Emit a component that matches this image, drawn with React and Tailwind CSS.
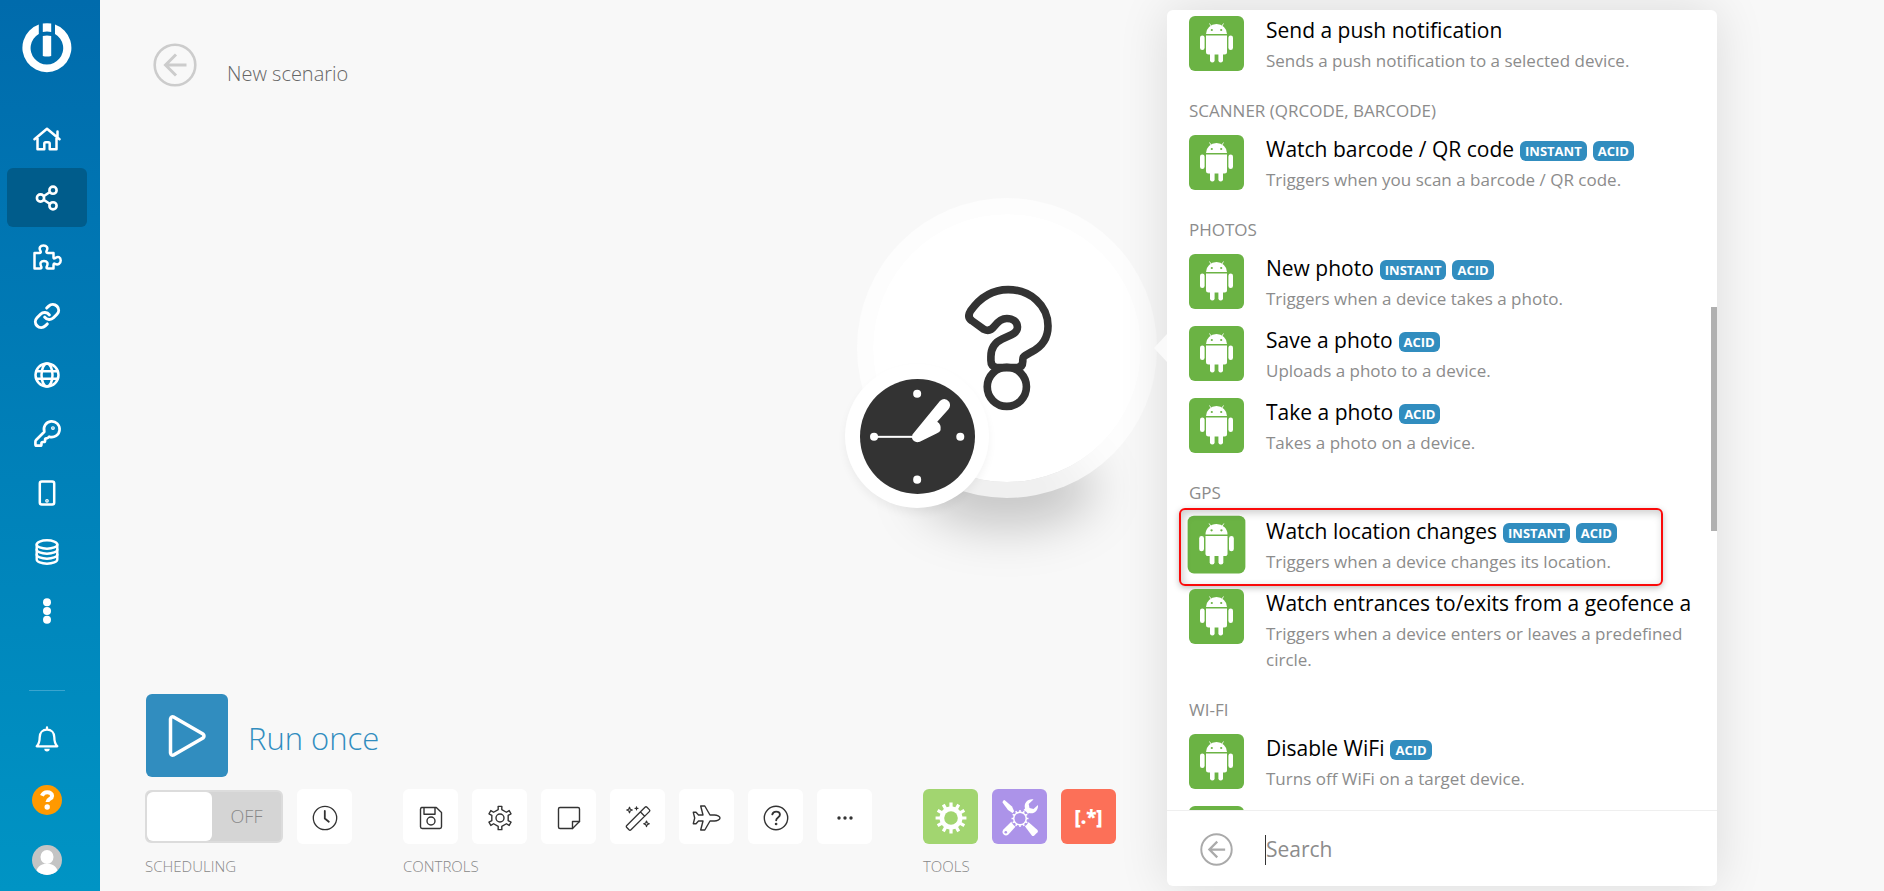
import React from "react";
import { KeyRound, Link } from "lucide-react";

const gearPath = (teeth, outer, inner, top, base) => {
  const step = (Math.PI * 2) / teeth;
  const point = (r, a) =>
    `${(r * Math.sin(a)).toFixed(2)} ${(-r * Math.cos(a)).toFixed(2)}`;
  const points = [];
  for (let i = 0; i < teeth; i++) {
    const a = i * step;
    points.push(point(inner, a - step * base));
    points.push(point(outer, a - step * top));
    points.push(point(outer, a + step * top));
    points.push(point(inner, a + step * base));
  }
  return `M${points.join("L")}Z`;
};

const Icon = ({ w = 26, h = 26, stroke = 2.5, className = "", children }) => (
  <svg
    width={w}
    height={h}
    viewBox={`0 0 ${w} ${h}`}
    fill="none"
    stroke="currentColor"
    strokeWidth={stroke}
    strokeLinecap="round"
    strokeLinejoin="round"
    className={className}
    aria-hidden="true"
  >
    {children}
  </svg>
);

const Logo = () => (
  <svg width="50" height="50" viewBox="0 0 50 50" aria-hidden="true">
    <path
      d="M16.8 1.600A24.500 24.500 0 1 0 33 1.600V11A16.300 16.300 0 1 1 16.800 11Z"
      fill="#fff"
    />
    <path d="M20.800 .5Q25 0 29.200 .5V9Q25 8 20.800 9Z" fill="#fff" />
    <path d="M20.800 13Q25 12 29.200 13V33Q25 34 20.800 33Z" fill="#fff" />
  </svg>
);

const HomeIcon = () => (
  <Icon w={28} h={24}>
    <path d="M1.500 12.300L14 1.800l12.500 10.500M24.500 4.500v5.500M4.500 11v11.300h6.800v-5.500q0-1.500 1.500-1.500h2.400q1.500 0 1.500 1.500v5.500h6.800V11" />
  </Icon>
);

const ShareIcon = () => (
  <Icon w={24} h={26} stroke={2.6}>
    <circle cx="5.500" cy="13" r="3.600" />
    <circle cx="18" cy="5.200" r="3.600" />
    <circle cx="18" cy="20.800" r="3.600" />
    <path d="M9 11l6-4M9 15l6 4" />
  </Icon>
);

const PuzzleIcon = () => (
  <Icon w={29} h={26}>
    <path d="M1.500 9H6.500Q8.300 9 7.500 7C5.500 3.500 7.500 1.500 10.500 1.500C13.500 1.500 15.500 3.500 13.500 7Q13 9 15 9H20.500V13.500Q20.500 15 22 14.200C25 11.500 27.700 13.500 27.700 16.500C27.700 19.500 25 21.500 22 19.800Q20.500 19 20.500 21V24.500H15Q13 24.500 13.800 22.500C15.500 19 14 17 11 17C8 17 6.500 19 8.200 22.500Q9 24.500 7 24.500H1.500Z" />
  </Icon>
);

const GlobeIcon = () => (
  <Icon>
    <circle cx="13" cy="13" r="11.500" />
    <ellipse cx="13" cy="13" rx="5.500" ry="11.500" />
    <path d="M2.500 9.300h21M2.500 16.700h21" />
  </Icon>
);

const PhoneIcon = () => (
  <Icon w={18} h={26}>
    <rect x="1.800" y="1.500" width="14.400" height="23" rx="2" />
    <circle cx="9" cy="20.800" r=".6" />
  </Icon>
);

const DatabaseIcon = () => (
  <Icon w={24} h={26} stroke={2.4}>
    <ellipse cx="12" cy="5.500" rx="10.300" ry="4.200" />
    <path d="M1.700 5.500v15c0 2.300 4.600 4.200 10.300 4.200s10.300-1.900 10.300-4.200v-15" />
    <path d="M1.700 10.500c0 2.300 4.600 4.200 10.300 4.200s10.300-1.900 10.300-4.200M1.700 15.500c0 2.300 4.600 4.200 10.300 4.200s10.300-1.900 10.300-4.200" />
  </Icon>
);

const DotsIcon = () => (
  <Icon w={10} h={26} stroke={0}>
    <g fill="currentColor">
      <circle cx="5" cy="4.300" r="4" />
      <circle cx="5" cy="13" r="4" />
      <circle cx="5" cy="21.700" r="4" />
    </g>
  </Icon>
);

const BellIcon = () => (
  <Icon w={24} h={26} stroke={2.3}>
    <path d="M12 1.500v2M1.700 20.300h20.600c-2.300-2.300-3-4-3-9 0-4.500-3-7.600-7.300-7.600s-7.300 3.100-7.300 7.600c0 5-.7 6.700-3 9z" />
    <path d="M9.300 22.800h5.400a2.700 2.700 0 0 1-5.400 0z" fill="currentColor" stroke="none" />
  </Icon>
);

const HelpIcon = () => (
  <svg width="30" height="30" viewBox="0 0 30 30" aria-hidden="true">
    <circle cx="15" cy="15" r="15" fill="#f90" />
    <path
      d="M9.900 10.800C11 8.300 12.800 7.200 15.200 7.200c3 0 4.900 1.500 4.900 3.700 0 3.300-4.600 2.700-4.600 6"
      fill="none"
      stroke="#fff"
      strokeWidth="4"
    />
    <circle cx="15.200" cy="22" r="2.700" fill="#fff" />
  </svg>
);

const Avatar = () => (
  <svg width="30" height="30" viewBox="0 0 30 30" aria-hidden="true">
    <clipPath id="avatar">
      <circle cx="15" cy="15" r="15" />
    </clipPath>
    <g clipPath="url(#avatar)">
      <rect width="30" height="30" fill="#c4c4c4" />
      <ellipse cx="15" cy="12" rx="6.500" ry="7" fill="#fff" />
      <path d="M4 30c0-7 3-9.500 8-11h6c5 1.500 8 4 8 11z" fill="#fff" />
    </g>
  </svg>
);

const BackIcon = ({ size, className }) => (
  <svg
    width={size}
    height={size}
    viewBox="0 0 44 44"
    fill="none"
    stroke="currentColor"
    strokeWidth="2.600"
    className={className}
    aria-hidden="true"
  >
    <circle cx="22" cy="22" r="20.300" />
    <path d="M33.500 22H12.500M23 11.500L12.500 22 23 32.500" strokeWidth="3" />
  </svg>
);

const ClockIcon = () => (
  <Icon stroke={1.300}>
    <circle cx="13" cy="13" r="11.700" />
    <path d="M12.800 6v7.500l4 3.200" strokeWidth="1.800" />
  </Icon>
);

const SaveIcon = () => (
  <Icon stroke={1.400}>
    <path d="M3.500 2.500h14.800l5.200 5v14.300q0 1.700-1.700 1.700H4.200q-1.700 0-1.700-1.700V4.200q0-1.700 1.700-1.700" />
    <path d="M6 2.700v6.500h11V2.700" />
    <circle cx="13" cy="16" r="4" />
  </Icon>
);

const SettingsIcon = () => (
  <Icon stroke={1.400}>
    <g transform="translate(13 13)">
      <path d={gearPath(6, 11.800, 8.600, 0.15, 0.2)} />
      <circle r="4" />
    </g>
  </Icon>
);

const NoteIcon = () => (
  <Icon stroke={1.400}>
    <path d="M23.500 16.500v-12.500q0-1.500-1.500-1.500H4q-1.500 0-1.500 1.500v18q0 1.500 1.500 1.500h12.500z" />
    <path d="M16.500 23.500v-7h7" />
  </Icon>
);

const WandIcon = () => (
  <Icon stroke={1.300}>
    <path d="M1.800 20.500L20 2.300q1-1 2 0l2.300 2.300q1 1 0 2L6 24.800q-1 1-2 0L1.800 22.500q-1-1 0-2zM15.500 7l4.200 4.200" />
    <path
      d="M4.500 2.200l.8 2 2 .8-2 .8-.8 2-.8-2-2-.8 2-.8zM21.500 16l.8 2 2 .8-2 .8-.8 2-.8-2-2-.8 2-.8zM11.500 1.800v3M10 3.300h3"
      strokeWidth="1.200"
    />
  </Icon>
);

const PlaneIcon = () => (
  <Icon w={29} h={26} stroke={1.400}>
    <path d="M22.500 10H18L12.800 1H8.700l2.300 9H6.500L4 7.300H1.300L2.700 13l-1.400 5.700H4L6.500 16H11l-2.300 9h4.100L18 16h4.500c2.500 0 5.500-1.200 5.500-3s-3-3-5.500-3z" />
  </Icon>
);

const QuestionIcon = () => (
  <Icon stroke={1.400}>
    <circle cx="13" cy="13" r="11.700" />
    <path
      d="M9.300 9.300c.7-1.800 2-2.700 3.800-2.700 2.200 0 3.800 1.300 3.800 3.200 0 2.700-3.700 2.600-3.700 5.400"
      strokeWidth="1.900"
    />
    <circle cx="13.100" cy="19" r=".6" strokeWidth="1.500" />
  </Icon>
);

const MoreIcon = () => (
  <Icon stroke={0}>
    <g fill="currentColor">
      <circle cx="7" cy="13" r="1.700" />
      <circle cx="13" cy="13" r="1.700" />
      <circle cx="19" cy="13" r="1.700" />
    </g>
  </Icon>
);

const FlowControlIcon = () => (
  <svg width="32" height="32" viewBox="-16 -16 32 32" aria-hidden="true">
    <path d={gearPath(12, 15.500, 11.500, 0.2, 0.27)} fill="#fff" />
    <circle r="6.800" fill="#a2d570" />
  </svg>
);

const ToolsIcon = () => (
  <svg width="40" height="40" viewBox="0 0 40 40" aria-hidden="true">
    <path d="M4.500 2L12 8.500l2 4.500-1.800 1.800L8 12 2.500 4.500q0-2.500 2-2.500z" fill="#fff" />
    <path d="M11 12l5 5" stroke="#fff" strokeWidth="2" />
    <path
      d="M33.500 1.500C28 .5 23.500 5 25 10.500L21.500 14l4 4 3.500-3C34 16.500 38.500 12.500 38 7l-4.500 4-4-1-.8-4z"
      fill="#fff"
    />
    <path
      d="M15 21l-3 2-8.800 8.800q-1.700 2.700.5 4.700 2.300 2 4.700 0L17 27l1.500-3z"
      fill="#fff"
    />
    <circle cx="5.800" cy="34.200" r="1.300" fill="#ac93e9" />
    <path
      d="M22.500 25l3-3.500 12 10.500q1 1.200 0 2.300l-3.200 3.300q-1.300 1-2.500 0z"
      fill="#fff"
    />
    <circle cx="20" cy="20.500" r="9.300" fill="#ac93e9" />
    <g transform="translate(20 20.500)">
      <path d={gearPath(12, 8.500, 7, 0.16, 0.22)} fill="#fff" />
      <circle r="5.500" fill="#ac93e9" />
    </g>
  </svg>
);

const AndroidIcon = ({ className = "" }) => (
  <svg
    viewBox="0 0 55 55"
    className={`size-[55px] shrink-0 rounded-md bg-[#6bb344] ${className}`}
    aria-hidden="true"
  >
    <g fill="#fff">
      <path d="M17 18a10.500 10 0 0 1 21 0z" />
      <path d="M17 19.500h21V36a2.500 2.500 0 0 1-2.500 2.500h-16A2.500 2.500 0 0 1 17 36z" />
      <rect x="11" y="19.500" width="4.600" height="14.500" rx="2.300" />
      <rect x="39.400" y="19.500" width="4.600" height="14.500" rx="2.300" />
      <rect x="21" y="34" width="4.600" height="12.500" rx="2.200" />
      <rect x="29.400" y="34" width="4.600" height="12.500" rx="2.200" />
    </g>
    <path d="M20.500 7.500l2.500 4M34.500 7.500l-2.500 4" stroke="#fff" strokeWidth=".9" />
    <circle cx="22.800" cy="14" r="1.100" fill="#6bb344" />
    <circle cx="32.200" cy="14" r="1.100" fill="#6bb344" />
  </svg>
);

const NAV = [
  { name: "Home", icon: <HomeIcon /> },
  { name: "Scenarios", icon: <ShareIcon />, active: true },
  { name: "Templates", icon: <PuzzleIcon /> },
  { name: "Connections", icon: <Link size={28} strokeWidth={2.600} /> },
  { name: "Webhooks", icon: <GlobeIcon /> },
  { name: "Keys", icon: <KeyRound size={29} strokeWidth={2.200} /> },
  { name: "Devices", icon: <PhoneIcon /> },
  { name: "Data stores", icon: <DatabaseIcon /> },
  { name: "More", icon: <DotsIcon /> },
];

const CONTROLS = [
  { name: "Save", icon: <SaveIcon /> },
  { name: "Scenario settings", icon: <SettingsIcon /> },
  { name: "Notes", icon: <NoteIcon /> },
  { name: "Auto-align", icon: <WandIcon /> },
  { name: "Explain flow", icon: <PlaneIcon /> },
  { name: "Help", icon: <QuestionIcon /> },
  { name: "More controls", icon: <MoreIcon /> },
];

const GROUPS = [
  {
    items: [
      {
        title: "Send a push notification",
        description: "Sends a push notification to a selected device.",
      },
    ],
  },
  {
    name: "SCANNER (QRCODE, BARCODE)",
    items: [
      {
        title: "Watch barcode / QR code",
        description: "Triggers when you scan a barcode / QR code.",
        tags: ["INSTANT", "ACID"],
      },
    ],
  },
  {
    name: "PHOTOS",
    items: [
      {
        title: "New photo",
        description: "Triggers when a device takes a photo.",
        tags: ["INSTANT", "ACID"],
      },
      {
        title: "Save a photo",
        description: "Uploads a photo to a device.",
        tags: ["ACID"],
      },
      {
        title: "Take a photo",
        description: "Takes a photo on a device.",
        tags: ["ACID"],
      },
    ],
  },
  {
    name: "GPS",
    items: [
      {
        title: "Watch location changes",
        description: "Triggers when a device changes its location.",
        tags: ["INSTANT", "ACID"],
        marked: true,
      },
      {
        title: "Watch entrances to/exits from a geofence a",
        description: "Triggers when a device enters or leaves a predefined circle.",
      },
    ],
  },
  {
    name: "WI-FI",
    items: [
      {
        title: "Disable WiFi",
        description: "Turns off WiFi on a target device.",
        tags: ["ACID"],
      },
      { title: "", description: "" },
    ],
  },
];

const Sidebar = () => (
  <nav className="flex w-[100px] shrink-0 flex-col bg-linear-to-b from-[#006bac] to-[#0094c4] pr-[6px] text-white">
    <a href="#home" aria-label="Logo" className="flex justify-center pt-[23px] pb-9">
      <Logo />
    </a>
    {NAV.map(({ name, icon, active }) => (
      <a
        key={name}
        href="#nav"
        aria-label={name}
        className={`mx-[7px] flex h-[59px] shrink-0 items-center justify-center rounded-md ${
          active ? "bg-[#005c8b]" : ""
        }`}
      >
        {icon}
      </a>
    ))}
    <hr className="mx-auto mt-auto w-9 border-[#3aa5cf]" />
    <div className="flex flex-col items-center gap-[30px] pt-8 pb-4">
      <button type="button" aria-label="Notifications" className="flex h-8 items-center">
        <BellIcon />
      </button>
      <button type="button" aria-label="Help">
        <HelpIcon />
      </button>
      <button type="button" aria-label="Profile">
        <Avatar />
      </button>
    </div>
  </nav>
);

const SquareButton = ({ name, className = "bg-white", children }) => (
  <button
    type="button"
    aria-label={name}
    className={`flex size-[55px] items-center justify-center rounded-md pt-[2px] text-[#333] ${className}`}
  >
    {children}
  </button>
);

const ToolGroup = ({ label, children }) => (
  <div>
    <div className="flex h-[55px] items-center gap-[14px]">{children}</div>
    <div className="mt-3 text-[15px] leading-5 font-light text-[#888]">{label}</div>
  </div>
);

const Toolbar = () => (
  <div className="pb-[15px] pl-[45px]">
    <div className="mb-3 flex items-center gap-5 pl-px">
      <button
        type="button"
        aria-label="Run"
        className="flex h-[83px] w-[82px] items-center justify-center rounded-md bg-[#318dbf] text-white"
      >
        <Icon w={38} h={42} stroke={3.500}>
          <path d="M2.500 4v34q.5 3 3.500 1.800L35 23q2-2 0-4L6 2.200Q3 1 2.500 4z" />
        </Icon>
      </button>
      <span className="pt-1 text-[31px] leading-10 font-light text-[#318dbf]">Run once</span>
    </div>
    <div className="flex gap-[51px]">
      <ToolGroup label="SCHEDULING">
        <label className="flex h-[53px] w-[138px] cursor-pointer items-center rounded-md border-2 border-[#dcdcdc] bg-[#d5d5d5] text-[18px] font-light text-[#888]">
          <input type="checkbox" className="peer sr-only" />
          <span className="h-[49px] w-[65px] shrink-0 rounded-md bg-white" />
          <span className="flex-1 text-center">OFF</span>
        </label>
        <SquareButton name="Schedule settings">
          <ClockIcon />
        </SquareButton>
      </ToolGroup>
      <ToolGroup label="CONTROLS">
        {CONTROLS.map(({ name, icon }) => (
          <SquareButton key={name} name={name}>
            {icon}
          </SquareButton>
        ))}
      </ToolGroup>
      <ToolGroup label="TOOLS">
        <SquareButton name="Flow control" className="bg-[#a2d570]">
          <FlowControlIcon />
        </SquareButton>
        <SquareButton name="Tools" className="bg-[#ac93e9]">
          <ToolsIcon />
        </SquareButton>
        <SquareButton name="Text parser" className="bg-[#fc7058]">
          <span className="text-[19px] font-extrabold text-white">[.*]</span>
        </SquareButton>
      </ToolGroup>
    </div>
  </div>
);

const ModuleNode = () => (
  <div className="absolute top-[198px] left-[757px] size-[300px]">
    <div className="absolute bottom-[-30px] left-[62px] h-20 w-[176px] rounded-[50%] bg-black/20 blur-xl" />
    <button
      type="button"
      aria-label="Select module"
      className="relative flex size-[300px] items-center justify-center rounded-full border-[16px] border-white/70 bg-white bg-clip-padding pl-[3px]"
    >
      <svg
        width="87"
        height="126"
        viewBox="375 315 262 378"
        fill="none"
        stroke="#333"
        strokeWidth="23"
        aria-hidden="true"
      >
        <path d="M392 392C420 352 460 328 505 328C572 328 625 376 625 438C625 475 606 501 575 516L556 527Q549 531 549 540L549 545Q549 563 531 563L470 563Q453 560 453 542L453 530C453 505 465 487 487 477L515 464Q533 456 533 441C532 424 518 415 501 415C485 415 475 423 464 438C455 450 445 454 432 448L396 422Q380 411 392 392Z" />
        <circle cx="501" cy="621" r="59" />
      </svg>
    </button>
    <button
      type="button"
      aria-label="Schedule"
      className="absolute top-[166px] left-[-12px] flex size-[144px] items-center justify-center rounded-full bg-white shadow-[0_5px_8px_rgba(0,0,0,0.05)]"
    >
      <svg width="115" height="115" viewBox="61 599 344 344" aria-hidden="true">
        <circle cx="233" cy="771" r="172" fill="#333" />
        <g fill="#fff">
          <circle cx="232" cy="643" r="12" />
          <circle cx="361" cy="772" r="12" />
          <circle cx="232" cy="900" r="12" />
          <circle cx="103" cy="772" r="12" />
          <rect x="103" y="769" width="130" height="6" />
          <path d="M218 765L300 665Q315 652 328 668Q334 680 325 690L292 727Q305 735 302 752Q300 757 290 762L240 787Q222 792 216 775Z" />
        </g>
      </svg>
    </button>
  </div>
);

const ModuleItem = ({ title, description, tags = [], marked }) => (
  <button
    type="button"
    aria-label={title || "Next module"}
    className="relative flex min-h-[72px] w-full shrink-0 items-start gap-[22px] text-left"
  >
    <AndroidIcon className={marked ? "scale-105" : ""} />
    <span className="min-w-0 flex-1 pb-[14px]">
      <span className="flex items-center gap-[6px] overflow-hidden text-[21px] leading-7 whitespace-nowrap text-black">
        {title}
        {tags.map((tag) => (
          <span
            key={tag}
            className="mt-1 rounded-md bg-[#318dbf] px-[5px] text-[13px] leading-5 font-bold text-white"
          >
            {tag}
          </span>
        ))}
      </span>
      <span className="mt-1 block text-[17px] leading-[26px] text-[#8c8c8c]">
        {description}
      </span>
    </span>
    {marked && (
      <span className="absolute top-[-9px] right-[29px] left-[-10px] h-[78px] rounded-md border-2 border-[#fa0a0a] shadow-[0_2px_6px_rgba(0,0,0,0.25),inset_2px_3px_8px_rgba(0,0,0,0.2)]" />
    )}
  </button>
);

const ModulePicker = () => (
  <div className="absolute top-[10px] bottom-[5px] left-[1067px] flex w-[550px] flex-col rounded-md bg-white shadow-[0_0_50px_rgba(0,0,0,0.12)]">
    <span className="absolute top-[324px] left-[-13px] h-7 w-[13px] bg-[#fafafa] [clip-path:polygon(100%_0,100%_100%,0_50%)]" />
    <div className="relative min-h-0 flex-1 overflow-hidden pt-[6px] pr-[25px] pl-[22px]">
      {GROUPS.map(({ name, items }, i) => (
        <section key={i}>
          {name && (
            <h2 className="h-[47px] text-[17px] leading-[46px] text-[#8c8c8c]">{name}</h2>
          )}
          {items.map((item) => (
            <ModuleItem key={item.title} {...item} />
          ))}
        </section>
      ))}
      <div className="absolute top-[297px] right-0 h-[224px] w-[6px] bg-[#b0b0b0]" />
    </div>
    <div className="flex h-[76px] shrink-0 items-center border-t border-[#efefef] pt-[2px] pl-[33px]">
      <button type="button" aria-label="Back to apps">
        <BackIcon size={33} className="text-[#aaa]" />
      </button>
      <span className="ml-8 h-[30px] w-px bg-[#333]" />
      <input
        type="text"
        aria-label="Search"
        placeholder="Search"
        className="min-w-0 flex-1 text-[21px] outline-none placeholder:text-[#8c8c8c]"
      />
    </div>
  </div>
);

export default function App() {
  return (
    <div className="flex h-screen overflow-hidden bg-[#f8f8f8] font-['Open_Sans',sans-serif]">
      <Sidebar />
      <main className="relative flex min-w-0 flex-1 flex-col justify-between">
        <header className="flex items-start gap-[30px] pt-[43px] pl-[53px]">
          <button type="button" aria-label="Back">
            <BackIcon size={44} className="text-[#ccc]" />
          </button>
          <h1 className="pt-4 text-[20px] leading-[30px] font-light text-[#666]">
            New scenario
          </h1>
        </header>
        <ModuleNode />
        <Toolbar />
        <ModulePicker />
      </main>
    </div>
  );
}
